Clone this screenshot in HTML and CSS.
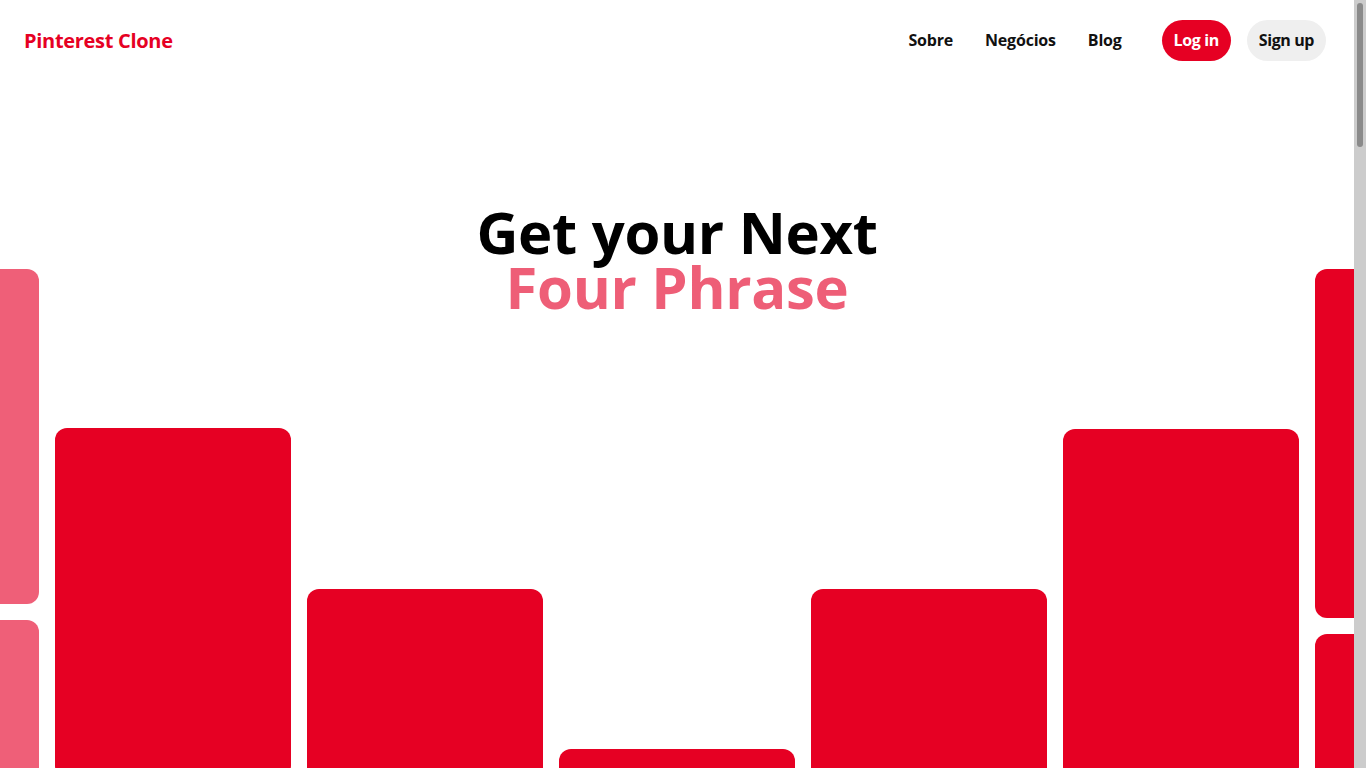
FILE: index.html
```html
<!DOCTYPE html>
<html lang="pt">
<head>
<meta charset="utf-8">
<title>Pinterest Clone</title>
<link rel="stylesheet" href="styles.css">
</head>
<body>
<header class="topbar">
  <a class="brand" href="#">Pinterest Clone</a>
  <nav class="nav">
    <a class="nav-link" href="#">Sobre</a>
    <a class="nav-link" href="#">Negócios</a>
    <a class="nav-link" href="#">Blog</a>
    <div class="auth">
      <a class="btn btn-login" href="#">Log in</a>
      <a class="btn btn-signup" href="#">Sign up</a>
    </div>
  </nav>
</header>
<main class="hero">
  <h1 class="title">
    <span class="title-line">Get your Next</span>
    <span class="title-line title-accent">Four Phrase</span>
  </h1>
  <section class="masonry">
    <div class="col col-0">
      <div class="card pink h-335"></div>
      <div class="card pink h-350"></div>
      <div class="card pink h-380"></div>
      <div class="card pink h-335"></div>
      <div class="card pink h-350"></div>
      <div class="card pink h-380"></div>
      <div class="card pink h-335"></div>
      <div class="card pink h-350"></div>
      <div class="card pink h-380"></div>
      <div class="card pink h-335"></div>
    </div>
    <div class="col col-1">
      <div class="card h-350"></div>
      <div class="card h-380"></div>
      <div class="card h-335"></div>
      <div class="card h-350"></div>
      <div class="card h-380"></div>
      <div class="card h-335"></div>
      <div class="card h-350"></div>
      <div class="card h-380"></div>
      <div class="card h-335"></div>
      <div class="card h-350"></div>
    </div>
    <div class="col col-2">
      <div class="card h-350"></div>
      <div class="card h-335"></div>
      <div class="card h-380"></div>
      <div class="card h-350"></div>
      <div class="card h-335"></div>
      <div class="card h-380"></div>
      <div class="card h-350"></div>
      <div class="card h-335"></div>
      <div class="card h-380"></div>
      <div class="card h-350"></div>
    </div>
    <div class="col col-3">
      <div class="card h-350"></div>
      <div class="card h-380"></div>
      <div class="card h-335"></div>
      <div class="card h-350"></div>
      <div class="card h-380"></div>
      <div class="card h-335"></div>
      <div class="card h-350"></div>
      <div class="card h-380"></div>
      <div class="card h-335"></div>
      <div class="card h-350"></div>
    </div>
    <div class="col col-2">
      <div class="card h-350"></div>
      <div class="card h-335"></div>
      <div class="card h-380"></div>
      <div class="card h-350"></div>
      <div class="card h-335"></div>
      <div class="card h-380"></div>
      <div class="card h-350"></div>
      <div class="card h-335"></div>
      <div class="card h-380"></div>
      <div class="card h-350"></div>
    </div>
    <div class="col col-5">
      <div class="card h-350"></div>
      <div class="card h-380"></div>
      <div class="card h-335"></div>
      <div class="card h-350"></div>
      <div class="card h-380"></div>
      <div class="card h-335"></div>
      <div class="card h-350"></div>
      <div class="card h-380"></div>
      <div class="card h-335"></div>
      <div class="card h-350"></div>
    </div>
    <div class="col col-0">
      <div class="card h-348"></div>
      <div class="card h-350"></div>
      <div class="card h-380"></div>
      <div class="card h-335"></div>
      <div class="card h-350"></div>
      <div class="card h-380"></div>
      <div class="card h-335"></div>
      <div class="card h-350"></div>
      <div class="card h-380"></div>
      <div class="card h-335"></div>
    </div>
  </section>
</main>
<div class="scrollbar" aria-hidden="true"><div class="scrollbar-thumb"></div></div>
</body>
</html>
```
FILE: styles.css
```css
* { box-sizing: border-box; }

html, body {
  margin: 0;
  padding: 0;
}

body {
  margin-right: 12px;
  font-family: "Open Sans", "Noto Sans", "DejaVu Sans", sans-serif;
  background: #ffffff;
  color: #111111;
  overflow-x: hidden;
}

a { text-decoration: none; }

.scrollbar {
  position: fixed;
  top: 0;
  right: 0;
  width: 12px;
  height: 100vh;
  background: #cccccc;
  z-index: 10;
}

.scrollbar-thumb {
  margin: 3px 0 0 3px;
  width: 6px;
  height: 144px;
  border-radius: 3px;
  background: #8a8a8a;
}

.topbar {
  height: 80px;
  padding: 0 28px 0 24px;
  display: flex;
  align-items: center;
  justify-content: space-between;
}

.brand {
  color: #e60023;
  font-weight: 700;
  font-size: 20px;
  letter-spacing: -0.3px;
  white-space: nowrap;
}

.nav {
  display: flex;
  align-items: center;
  gap: 32px;
}

.nav-link {
  color: #111111;
  font-weight: 700;
  font-size: 16px;
  letter-spacing: -0.2px;
  white-space: nowrap;
}

.auth {
  display: flex;
  align-items: center;
  gap: 16px;
  margin-left: 8px;
}

.btn {
  display: flex;
  align-items: center;
  justify-content: center;
  height: 41px;
  padding: 0 12px;
  border-radius: 21px;
  font-weight: 700;
  font-size: 16px;
  letter-spacing: -0.4px;
  white-space: nowrap;
}

.btn-login {
  background: #e60023;
  color: #ffffff;
}

.btn-signup {
  background: #efefef;
  color: #111111;
}

.hero {
  padding-top: 124px;
}

.title {
  margin: 0;
  text-align: center;
  font-size: 58px;
  font-weight: 700;
  line-height: 55px;
  letter-spacing: -0.3px;
  display: flex;
  flex-direction: column;
  align-items: center;
}

.title-line {
  display: block;
  color: #000000;
}

.title-accent {
  color: #ee5e77;
}

.masonry {
  margin-top: -45px;
  height: 3799px;
  overflow: hidden;
  display: flex;
  justify-content: center;
  gap: 16px;
}

.col {
  flex: 0 0 236px;
  display: flex;
  flex-direction: column;
  gap: 16px;
}

.col-1 { margin-top: 159px; }
.col-2 { margin-top: 320px; }
.col-3 { margin-top: 480px; }
.col-5 { margin-top: 160px; }

.card {
  flex: 0 0 auto;
  width: 236px;
  border-radius: 12px;
  background: #e60023;
}

.card.pink { background: #ef5f78; }

.h-335 { height: 335px; }
.h-348 { height: 349px; }
.h-350 { height: 350px; }
.h-380 { height: 380px; }
```
